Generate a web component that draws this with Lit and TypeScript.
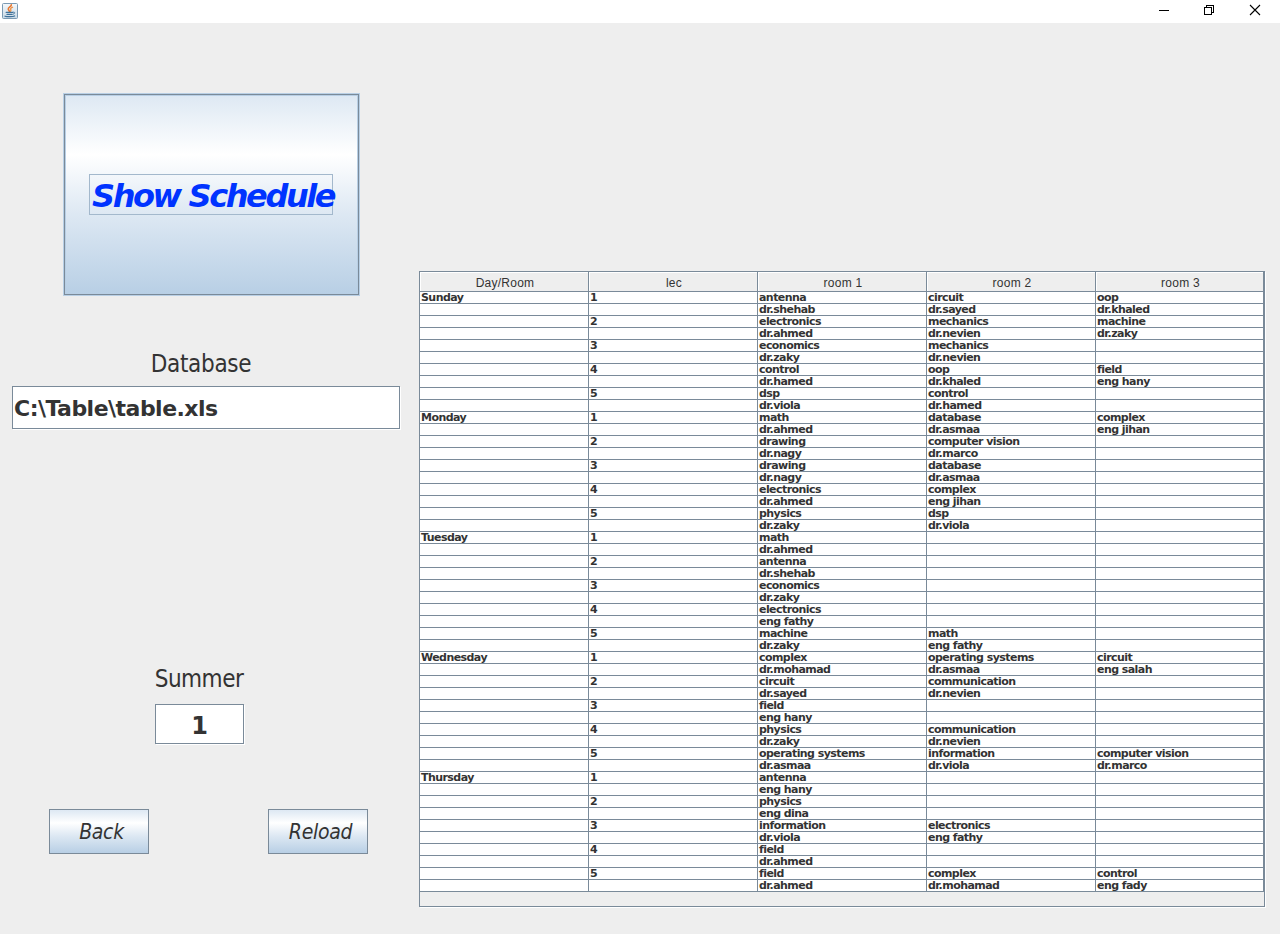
import { LitElement, html, css } from "lit";
import { customElement } from "lit/decorators.js";

type Pair = [string, string];
interface Slot {
  rooms: Pair[];
}
interface Day {
  name: string;
  slots: Slot[];
}

const slot = (...rooms: Pair[]): Slot => ({ rooms });

const DAYS: Day[] = [
  {
    name: "Sunday",
    slots: [
      slot(["antenna", "dr.shehab"], ["circuit", "dr.sayed"], ["oop", "dr.khaled"]),
      slot(["electronics", "dr.ahmed"], ["mechanics", "dr.nevien"], ["machine", "dr.zaky"]),
      slot(["economics", "dr.zaky"], ["mechanics", "dr.nevien"]),
      slot(["control", "dr.hamed"], ["oop", "dr.khaled"], ["field", "eng hany"]),
      slot(["dsp", "dr.viola"], ["control", "dr.hamed"]),
    ],
  },
  {
    name: "Monday",
    slots: [
      slot(["math", "dr.ahmed"], ["database", "dr.asmaa"], ["complex", "eng jihan"]),
      slot(["drawing", "dr.nagy"], ["computer vision", "dr.marco"]),
      slot(["drawing", "dr.nagy"], ["database", "dr.asmaa"]),
      slot(["electronics", "dr.ahmed"], ["complex", "eng jihan"]),
      slot(["physics", "dr.zaky"], ["dsp", "dr.viola"]),
    ],
  },
  {
    name: "Tuesday",
    slots: [
      slot(["math", "dr.ahmed"]),
      slot(["antenna", "dr.shehab"]),
      slot(["economics", "dr.zaky"]),
      slot(["electronics", "eng fathy"]),
      slot(["machine", "dr.zaky"], ["math", "eng fathy"]),
    ],
  },
  {
    name: "Wednesday",
    slots: [
      slot(["complex", "dr.mohamad"], ["operating systems", "dr.asmaa"], ["circuit", "eng salah"]),
      slot(["circuit", "dr.sayed"], ["communication", "dr.nevien"]),
      slot(["field", "eng hany"]),
      slot(["physics", "dr.zaky"], ["communication", "dr.nevien"]),
      slot(["operating systems", "dr.asmaa"], ["information", "dr.viola"], ["computer vision", "dr.marco"]),
    ],
  },
  {
    name: "Thursday",
    slots: [
      slot(["antenna", "eng hany"]),
      slot(["physics", "eng dina"]),
      slot(["information", "dr.viola"], ["electronics", "eng fathy"]),
      slot(["field", "dr.ahmed"]),
      slot(["field", "dr.ahmed"], ["complex", "dr.mohamad"], ["control", "eng fady"]),
    ],
  },
];

const ROWS: string[][] = DAYS.flatMap((day) =>
  day.slots.flatMap((s, i) =>
    [0, 1].map((line) => [
      i === 0 && line === 0 ? day.name : "",
      line === 0 ? String(i + 1) : "",
      ...[0, 1, 2].map((r) => s.rooms[r]?.[line] ?? ""),
    ]),
  ),
);

@customElement("title-bar")
export class TitleBar extends LitElement {
  static styles = css`
    :host {
      display: flex;
      align-items: flex-start;
      justify-content: space-between;
      height: 23px;
      background: #fff;
    }
    .logo {
      display: block;
      margin: 3px 0 0 2px;
    }
    .controls {
      display: block;
      margin-right: 19px;
    }
  `;

  render() {
    return html`
      <svg class="logo" width="16" height="16" viewBox="0 0 16 16">
        <defs>
          <linearGradient id="tile" x1="0" y1="0" x2="0" y2="1">
            <stop offset="0" stop-color="#f4f8fb" />
            <stop offset="1" stop-color="#c9d9e6" />
          </linearGradient>
        </defs>
        <rect x="0.5" y="0.5" width="15" height="15" rx="1" fill="url(#tile)" stroke="#7b9ab3" />
        <g fill="none" stroke-linecap="round">
          <path d="M9.3 1.8C9.6 3.6 6 4.3 6.3 6.1C6.4 7 7.4 7.5 7.4 8.4" stroke="#e8762d" stroke-width="1.6" />
          <path d="M10.6 4.2C8.8 4.9 8.2 5.7 8.8 6.6C9.2 7.3 9 7.8 8.4 8.4" stroke="#ee8b3a" stroke-width="1.2" />
          <path d="M4.2 9.4H10.6M5 11.4H10" stroke="#3f7199" stroke-width="1.2" />
          <path d="M11.2 9.2C13.6 8.8 13.2 10.8 11 11.2" stroke="#3f7199" stroke-width="1" />
          <path d="M3 13.2C5 13.9 11 13.9 12.6 13" stroke="#3f7199" stroke-width="1.2" />
        </g>
      </svg>
      <svg class="controls" width="102" height="22" viewBox="1159 0 102 22" shape-rendering="crispEdges">
        <rect x="1159" y="10" width="10" height="1" fill="#000" />
        <path d="M1206.5 7V5.5H1213.5V12.5H1212" fill="none" stroke="#000" />
        <rect x="1204.5" y="7.5" width="7" height="7" fill="none" stroke="#000" />
        <path
          d="M1250 5L1260 15M1260 5L1250 15"
          stroke="#000"
          stroke-width="1.1"
          shape-rendering="geometricPrecision"
        />
      </svg>
    `;
  }
}

@customElement("schedule-table")
export class ScheduleTable extends LitElement {
  static styles = css`
    :host {
      display: block;
      box-sizing: border-box;
      width: 846px;
      height: 636px;
      border: 1px solid #7a8a99;
      box-shadow: 1px 1px 0 #fff;
      color: #333;
    }
    .row,
    .head {
      display: grid;
      grid-template-columns: repeat(4, 169px) 168px;
    }
    .head {
      font: 12px/22px "Liberation Sans", Arial, sans-serif;
      letter-spacing: 0.25px;
      text-align: center;
    }
    .th {
      box-sizing: border-box;
      height: 20px;
      padding-left: 2px;
      border: solid #7a8a99;
      border-width: 0 1px 1px 0;
      box-shadow: inset 1px 1px 0 #fff;
    }
    .td {
      box-sizing: border-box;
      height: 12px;
      padding-left: 1px;
      border: solid #7a8a99;
      border-width: 0 1px 1px 0;
      background: #fff;
      font: bold 11px/11px "DejaVu Sans", sans-serif;
      letter-spacing: -0.56px;
      white-space: nowrap;
    }
  `;

  render() {
    return html`
      <div class="head">
        ${["Day/Room", "lec", "room 1", "room 2", "room 3"].map((h) => html`<div class="th">${h}</div>`)}
      </div>
      ${ROWS.map((row) => html`<div class="row">${row.map((c) => html`<div class="td">${c}</div>`)}</div>`)}
    `;
  }
}

@customElement("app-root")
export class AppRoot extends LitElement {
  static styles = css`
    :host {
      display: block;
      width: 1280px;
      height: 934px;
      overflow: hidden;
      background: #eee;
      color: #333;
      font-family: "DejaVu Sans Condensed", "DejaVu Sans", sans-serif;
    }
    .body {
      display: flex;
      align-items: flex-start;
    }
    .side {
      display: flex;
      flex-direction: column;
      width: 419px;
      padding-top: 70px;
    }
    .table {
      margin-top: 248px;
    }
    button {
      box-sizing: border-box;
      margin: 0;
      padding: 0;
      border: 1px solid #7a8a99;
      border-radius: 0;
      color: #333;
      background: linear-gradient(#dde8f3, #fff 30%, #dde8f3 60%, #b8cfe5);
      font: italic 21px/24px "DejaVu Sans Condensed", "DejaVu Sans", sans-serif;
      letter-spacing: -0.3px;
      white-space: nowrap;
    }
    .show {
      display: flex;
      align-items: center;
      width: 295px;
      height: 201px;
      margin: 1px 0 0 64px;
      padding-left: 24px;
      box-shadow: 0 0 0 1px #b8cfe5, inset 0 0 0 1px #b8cfe5;
    }
    .focus {
      box-sizing: border-box;
      width: 244px;
      height: 41px;
      padding-left: 2px;
      border: 1px solid #a3b8cc;
      color: #0033ff;
      font: italic bold 32px/42px "DejaVu Sans", sans-serif;
      letter-spacing: -2.4px;
      text-align: left;
    }
    .label {
      font-size: 24px;
      line-height: 30px;
      text-align: center;
      letter-spacing: -0.3px;
    }
    .database {
      width: 402px;
      margin-top: 54px;
    }
    .summer {
      width: 398px;
      margin-top: 235px;
      letter-spacing: -0.5px;
    }
    .field {
      box-sizing: border-box;
      border: 1px solid #7a8a99;
      box-shadow: 1px 1px 0 #fff;
      background: #fff;
      font-family: "DejaVu Sans", sans-serif;
      font-weight: bold;
    }
    .path {
      width: 388px;
      height: 43px;
      margin: 7px 0 0 12px;
      padding-left: 1px;
      font-size: 22px;
      line-height: 43px;
      letter-spacing: -0.52px;
    }
    .term {
      width: 89px;
      height: 40px;
      margin: 10px 0 0 155px;
      font-size: 24px;
      line-height: 42px;
      text-align: center;
    }
    .actions {
      display: flex;
      gap: 119px;
      margin: 65px 0 0 49px;
    }
    .action {
      width: 100px;
      height: 45px;
      padding-left: 5px;
    }
  `;

  render() {
    return html`
      <title-bar></title-bar>
      <div class="body">
        <div class="side">
          <button class="show"><span class="focus">Show Schedule</span></button>
          <div class="label database">Database</div>
          <div class="field path">C:\\Table\\table.xls</div>
          <div class="label summer">Summer</div>
          <div class="field term">1</div>
          <div class="actions">
            <button class="action">Back</button>
            <button class="action">Reload</button>
          </div>
        </div>
        <schedule-table class="table"></schedule-table>
      </div>
    `;
  }
}
